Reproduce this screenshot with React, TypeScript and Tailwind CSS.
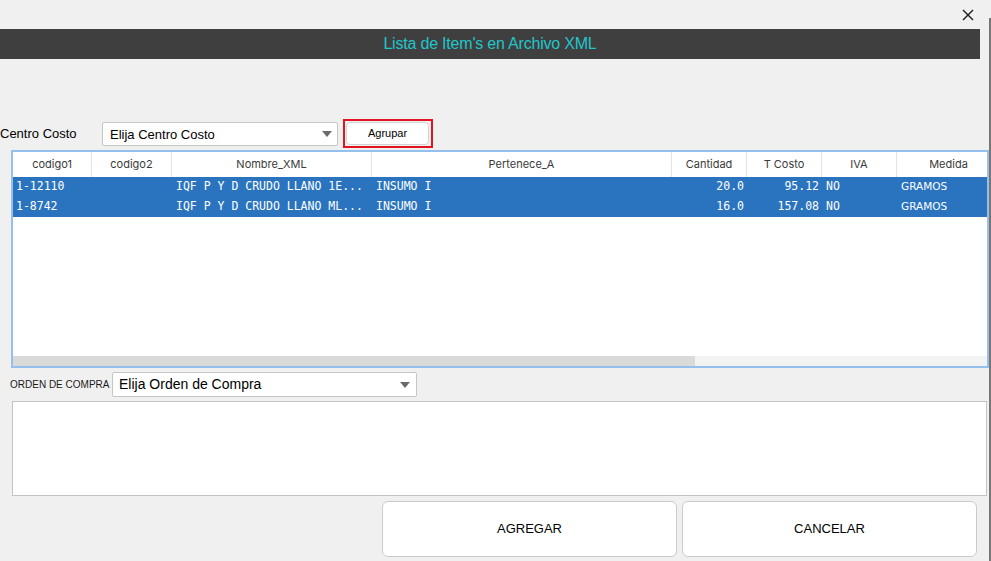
const cols = [
  { name: "codigo1", w: "w-[79px]" },
  { name: "codigo2", w: "w-[80px]" },
  { name: "Nombre_XML", w: "w-[200px]" },
  { name: "Pertenece_A", w: "w-[300px]" },
  { name: "Cantidad", w: "w-[75px]" },
  { name: "T Costo", w: "w-[75px]" },
  { name: "IVA", w: "w-[75px]" },
  { name: "Medida", w: "w-[104px]" },
];

const rows = [
  { c1: "1-12110", c2: "", nombre: "IQF P Y D CRUDO LLANO 1E...", pert: "INSUMO I", cant: "20.0", costo: "95.12", iva: "NO", med: "GRAMOS" },
  { c1: "1-8742", c2: "", nombre: "IQF P Y D CRUDO LLANO ML...", pert: "INSUMO I", cant: "16.0", costo: "157.08", iva: "NO", med: "GRAMOS" },
];

const Arrow = () => (
  <svg width="10" height="6" viewBox="0 0 10 6" className="shrink-0">
    <path d="M0 0 L10 0 L5 6 Z" fill="#6b6b6b" />
  </svg>
);

const mono = "font-['DejaVu_Sans_Mono',monospace] text-[11.5px]";

export default function App() {
  return (
    <div className="relative w-[991px] h-[561px] bg-[#f0f0f0] overflow-hidden font-['Liberation_Sans',Arial,sans-serif] text-black">
      <div className="absolute right-0 top-[18px] bottom-0 w-[2px] bg-[#777777]" />

      {/* close */}
      <div className="h-[29px] w-[980px] flex items-center justify-end pr-[6px]">
        <svg width="12" height="12" viewBox="0 0 12 12">
          <path d="M1 1 L11 11 M11 1 L1 11" stroke="#1a1a1a" strokeWidth="1.4" />
        </svg>
      </div>

      {/* title */}
      <div className="h-[30px] w-[980px] bg-[#3f3f3f] flex items-center justify-center">
        <span className="text-[16px] text-[#1fc6cb] tracking-[-0.2px]">Lista de Item's en Archivo XML</span>
      </div>

      {/* centro costo */}
      <div className="mt-[60px] h-[29px] flex items-center">
        <span className="text-[13px] w-[102px] pt-[1px]">Centro Costo</span>
        <div className="mt-[1px] w-[236px] h-[24px] bg-white border border-[#c6c6c6] rounded-[2px] flex items-center justify-between pl-[7px] pr-[5px]">
          <span className="text-[13px] pt-[1px]">Elija Centro Costo</span>
          <Arrow />
        </div>
        <div className="ml-[5px] w-[90px] h-[29px] border-2 border-[#e3141f] flex items-center pl-[1px]">
          <div className="w-[83px] h-[23px] bg-white border border-[#d4d4d4] rounded-[4px] flex items-center justify-center text-[11px]">
            Agrupar
          </div>
        </div>
      </div>

      {/* table */}
      <div className="mt-[2px] ml-[11px] w-[978px] h-[218px] border-2 border-[#96c0ec] bg-white flex flex-col overflow-hidden">
        <div className="h-[25px] flex shrink-0 font-['Inter',sans-serif] text-[11px] text-[#3a3a3a]">
          {cols.map((c) => (
            <div key={c.name} className={`${c.w} shrink-0 h-full flex items-center justify-center border-r border-[#e4e4e4]`}>
              {c.name}
            </div>
          ))}
        </div>
        <div className="flex-1">
          {rows.map((r) => (
            <div key={r.c1} className="h-[20px] bg-[#2a74bf] text-white flex items-center">
              <div className={`w-[79px] shrink-0 pl-[3px] ${mono}`}>{r.c1}</div>
              <div className={`w-[80px] shrink-0 ${mono}`}>{r.c2}</div>
              <div className={`w-[200px] shrink-0 pl-[4px] ${mono}`}>{r.nombre}</div>
              <div className={`w-[300px] shrink-0 pl-[4px] ${mono}`}>{r.pert}</div>
              <div className={`w-[75px] shrink-0 pr-[3px] text-right ${mono}`}>{r.cant}</div>
              <div className={`w-[75px] shrink-0 pr-[3px] text-right ${mono}`}>{r.costo}</div>
              <div className={`w-[75px] shrink-0 pl-[4px] ${mono}`}>{r.iva}</div>
              <div className="w-[90px] shrink-0 pl-[4px] font-['DejaVu_Sans',sans-serif] text-[10.5px]">{r.med}</div>
            </div>
          ))}
        </div>
        <div className="h-[10px] shrink-0 bg-[#f3f3f3] flex">
          <div className="w-[682px] h-full bg-[#dadada]" />
        </div>
      </div>

      {/* orden de compra */}
      <div className="mt-[4px] h-[25px] flex items-center">
        <span className="ml-[10px] w-[102px] text-[10px] text-[#1a1a1a]">ORDEN DE COMPRA</span>
        <div className="w-[305px] h-[25px] bg-white border border-[#c6c6c6] rounded-[2px] flex items-center justify-between pl-[6px] pr-[6px]">
          <span className="text-[14px]">Elija Orden de Compra</span>
          <Arrow />
        </div>
      </div>

      <div className="mt-[4px] ml-[12px] w-[975px] h-[95px] bg-white border border-[#c3c3c3]" />

      {/* buttons */}
      <div className="mt-[5px] ml-[382px] flex gap-[5px]">
        <button className="w-[295px] h-[56px] bg-white border border-[#cbcbcb] rounded-[6px] text-[13px]">AGREGAR</button>
        <button className="w-[295px] h-[56px] bg-white border border-[#cbcbcb] rounded-[6px] text-[13px]">CANCELAR</button>
      </div>
    </div>
  );
}
